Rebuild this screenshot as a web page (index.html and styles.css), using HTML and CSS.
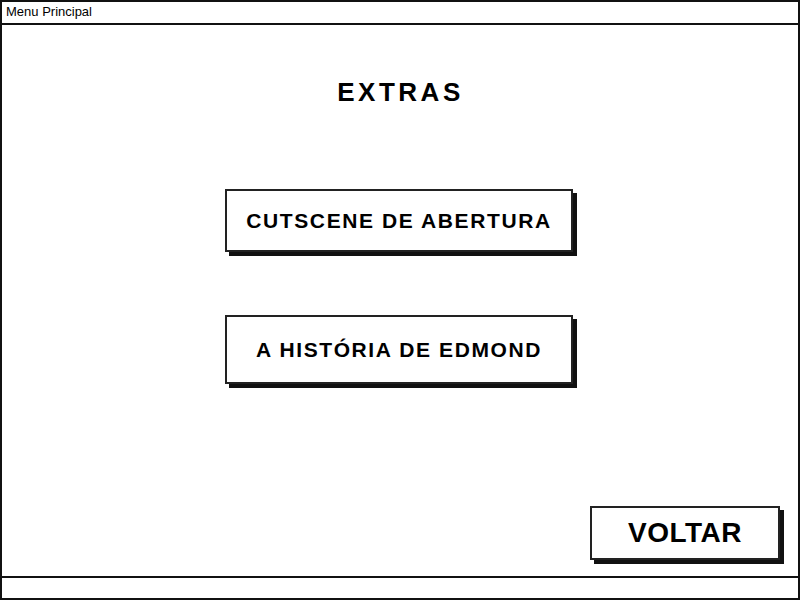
FILE: index.html
```html
<!DOCTYPE html>
<html lang="pt">
<head>
  <meta charset="UTF-8" />
  <title>Menu Principal</title>
  <link rel="stylesheet" href="styles.css">
</head>
<body>
  <div class="janela">
    <div class="barra-titulo">Menu Principal</div>
    <div class="conteudo">
      <h1>EXTRAS</h1>
      <div class="opcoes">
        <button class="botao botao-1">CUTSCENE DE ABERTURA</button>
        <button class="botao botao-2">A HISTÓRIA DE EDMOND</button>
      </div>
      <div class="rodape-acoes">
        <button class="botao botao-voltar">VOLTAR</button>
      </div>
    </div>
    <div class="barra-status"></div>
  </div>
</body>
</html>
```

FILE: styles.css
```css
* { box-sizing: border-box; margin: 0; padding: 0; }
body {
  font-family: "Liberation Sans", Arial, sans-serif;
  background: #fff;
  color: #000;
  width: 800px;
  height: 600px;
}
.janela {
  width: 800px;
  height: 600px;
  border: 2px solid #111;
  display: flex;
  flex-direction: column;
}
.barra-titulo {
  height: 23px;
  border-bottom: 2px solid #111;
  font-size: 13px;
  line-height: 20px;
  padding-left: 4px;
}
.conteudo {
  flex: 1;
  display: flex;
  flex-direction: column;
  align-items: center;
}
h1 {
  font-size: 26px;
  font-weight: bold;
  letter-spacing: 3.5px;
  margin-top: 52px;
  margin-left: 1px;
  line-height: 30px;
}
.opcoes {
  display: flex;
  flex-direction: column;
  align-items: center;
  margin-top: 82px;
  margin-left: -2px;
}
.botao {
  font-family: "Liberation Sans", Arial, sans-serif;
  font-weight: bold;
  background: #fff;
  color: #000;
  border: 2px solid #222;
  box-shadow: 4px 4px 0 #111;
  cursor: pointer;
}
.botao-1,
.botao-2 {
  width: 348px;
  font-size: 21px;
  letter-spacing: 1.6px;
}
.botao-1 { height: 63px; }
.botao-2 {
  height: 69px;
  margin-top: 63px;
}
.rodape-acoes {
  margin-top: auto;
  align-self: flex-end;
  margin-right: 18px;
  margin-bottom: 16px;
}
.botao-voltar {
  width: 190px;
  height: 54px;
  font-size: 28px;
  letter-spacing: 0.5px;
}
.barra-status {
  height: 22px;
  border-top: 2px solid #111;
}
```
